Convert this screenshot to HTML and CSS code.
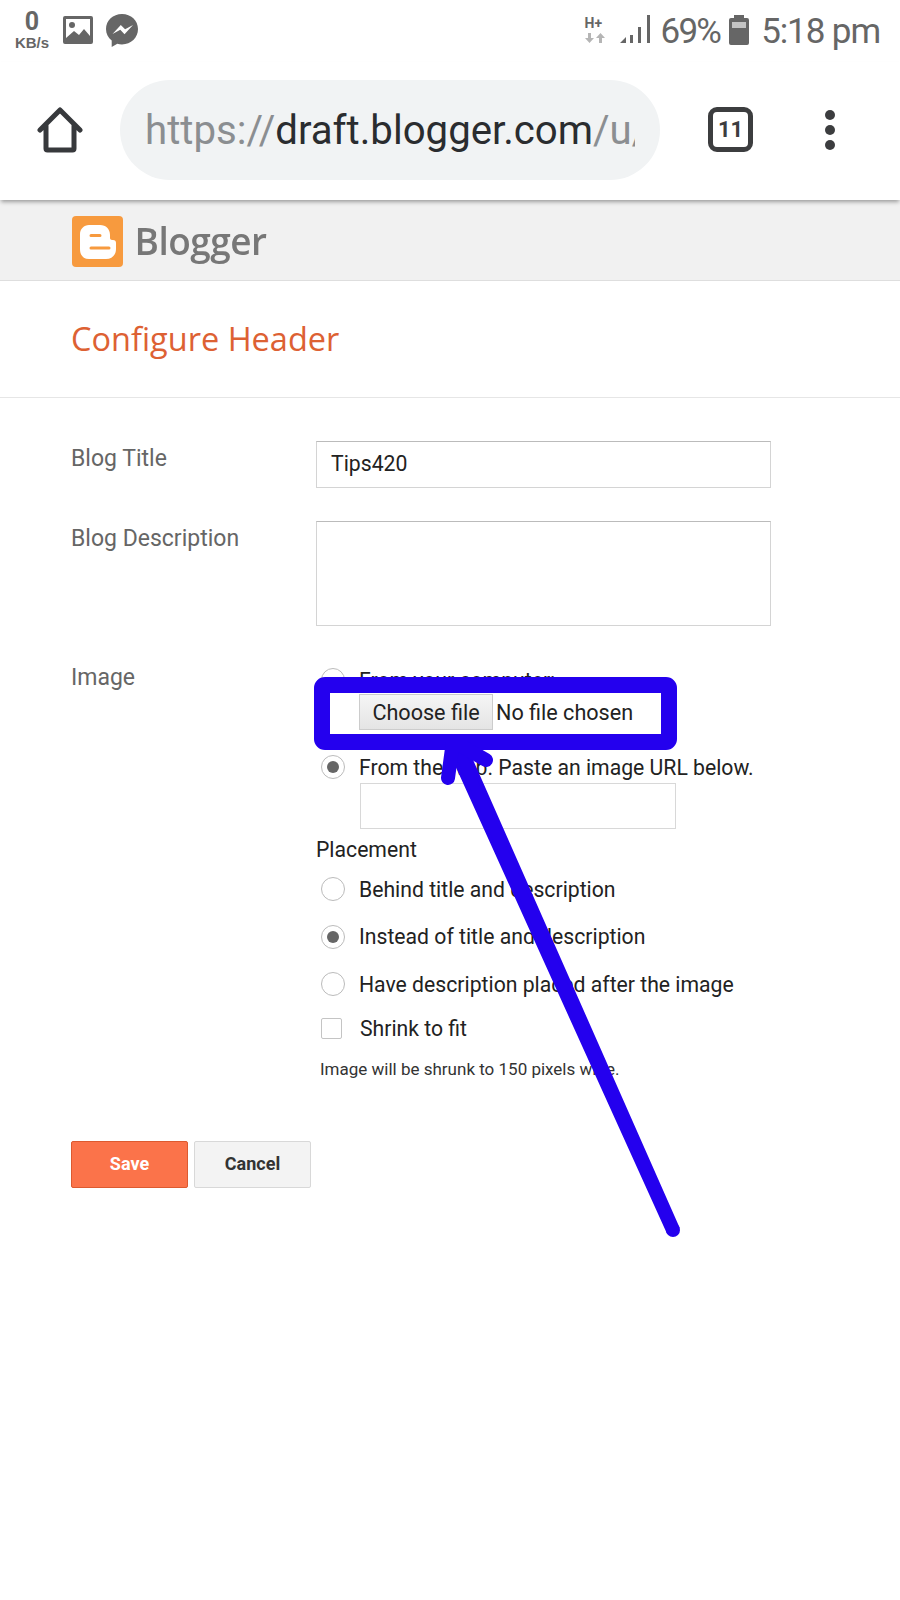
FILE: index.html
```html
<!DOCTYPE html>
<html lang="en">
<head>
    <meta charset="UTF-8">
    <meta name="viewport" content="width=device-width, initial-scale=1.0">
    <title>Configure Header</title>
    <link rel="stylesheet" href="styles.css">
</head>
<body>
    <div class="page">
        <!-- Phone status bar -->
        <div class="status-bar">
            <div class="status-left">
                <div class="speed"><span class="speed-num">0</span><span class="speed-unit">KB/s</span></div>
                <svg class="icon-image" width="30" height="28" viewBox="0 0 30 28">
                    <path fill="#666" fill-rule="evenodd" d="M2 0h26a2 2 0 0 1 2 2v24a2 2 0 0 1-2 2H2a2 2 0 0 1-2-2V2a2 2 0 0 1 2-2zM3 3v19l8-7 5 4 5-6 6 7V3z"/>
                    <circle cx="9" cy="9" r="3" fill="#666"/>
                </svg>
                <svg class="icon-messenger" width="32" height="33" viewBox="0 0 32 33">
                    <path fill="#666" d="M16 0C7 0 0 6.600 0 15c0 4.700 2.200 8.800 5.700 11.600V33l5.600-3.200c1.500.4 3 .6 4.700.6 9 0 16-6.800 16-15.400S25 0 16 0z"/>
                    <path fill="#fff" d="M6.500 20l8.300-9 4.300 4.300 7.900-4.300-8.500 9.200-4.200-4.400z"/>
                </svg>
            </div>
            <div class="status-right">
                <div class="net">
                    <span class="net-type">H+</span>
                    <svg width="20" height="10" viewBox="0 0 20 10">
                        <path fill="#b5b5b5" d="M3 0h3v5h3L4.500 10 0 5h3zM14 10h3V5h3L15.500 0 11 5h3z"/>
                    </svg>
                </div>
                <svg class="icon-signal" width="30" height="28" viewBox="0 0 30 28">
                    <path fill="#666" d="M0 28l6-6v6zM10 20h3v8h-3zM18 12h3v16h-3zM27 0h3v28h-3z"/>
                </svg>
                <span class="status-text pct">69%</span>
                <svg class="icon-battery" width="20" height="30" viewBox="0 0 20 30">
                    <path fill="#666" d="M5 0h10v3h3a2 2 0 0 1 2 2v23a2 2 0 0 1-2 2H2a2 2 0 0 1-2-2V5a2 2 0 0 1 2-2h3z"/>
                    <rect x="3" y="7" width="14" height="6" fill="#c4c4c4"/>
                </svg>
                <span class="status-text">5:18 pm</span>
            </div>
        </div>

        <!-- Browser toolbar -->
        <div class="toolbar">
            <svg class="icon-home" width="46" height="46" viewBox="0 0 46 46">
                <path fill="none" stroke="#37393c" stroke-width="5" stroke-linecap="round" stroke-linejoin="round" d="M3 23L23 3l20 20M9 18v23.500a1.500 1.500 0 0 0 1.500 1.500h25a1.500 1.500 0 0 0 1.500-1.500V18"/>
            </svg>
            <div class="url-pill">
                <div class="url-text"><span class="url-dim">https://</span>draft.blogger.com<span class="url-dim">/u/</span></div>
            </div>
            <div class="tabs-count">11</div>
            <div class="menu-dots"><span></span><span></span><span></span></div>
        </div>

        <!-- Blogger band -->
        <div class="brand-band">
            <svg class="brand-logo" width="51" height="51" viewBox="0 0 51 51">
                <rect width="51" height="51" rx="4" fill="#f79a3e"/>
                <path fill="#fff" d="M17 9h11c6 0 10 4 10 10v3c0 1 1 2 2 2h1c2 0 3 1 3 3v6c0 6-4 10-10 10H17C11 43 8 39 8 33V18c0-5 4-9 9-9z"/>
                <path fill="none" stroke="#f79a3e" stroke-width="3" stroke-linecap="round" d="M19 19.500h9M19 32h18"/>
            </svg>
            <span class="brand-name">Blogger</span>
        </div>

        <!-- Heading -->
        <div class="page-head">
            <h1>Configure Header</h1>
        </div>

        <!-- Form -->
        <form class="config-form">
            <label class="field-label">Blog Title</label>
            <div class="title-input">Tips420</div>

            <label class="field-label">Blog Description</label>
            <div class="desc-input"></div>

            <label class="field-label">Image</label>
            <div class="image-options">
                <div class="radio-row radio-row-top"><span class="radio"></span><span>From your computer:</span></div>
                <div class="file-row"><span class="file-btn">Choose file</span><span>No file chosen</span></div>
                <div class="radio-row radio-row-web"><span class="radio checked"></span><span>From the web. Paste an image URL below.</span></div>
                <div class="url-input"></div>
                <div class="placement-title">Placement</div>
                <div class="radio-row radio-row-place"><span class="radio"></span><span>Behind title and description</span></div>
                <div class="radio-row radio-row-place"><span class="radio checked"></span><span>Instead of title and description</span></div>
                <div class="radio-row radio-row-place"><span class="radio"></span><span>Have description placed after the image</span></div>
                <div class="check-row"><span class="checkbox"></span><span>Shrink to fit</span></div>
                <div class="hint">Image will be shrunk to 150 pixels wide.</div>
            </div>
        </form>

        <div class="actions">
            <button type="button" class="btn btn-save">Save</button>
            <button type="button" class="btn btn-cancel">Cancel</button>
        </div>

        <!-- Hand drawn annotation on top of the screenshot -->
        <svg class="annotation" width="900" height="1600" viewBox="0 0 900 1600">
            <rect x="322" y="685" width="347" height="57" rx="3" fill="none" stroke="#2400ee" stroke-width="16"/>
            <path fill="#2400ee" stroke="#2400ee" stroke-width="4" stroke-linejoin="round" d="M677.500 1227.900L668.500 1232.100L449.500 748.200L463 742z"/>
            <circle cx="673" cy="1230" r="7" fill="#2400ee"/>
            <path fill="none" stroke="#2400ee" stroke-width="14" stroke-linecap="round" stroke-linejoin="round" d="M448 778L453 741L486 760"/>
        </svg>
    </div>
</body>
</html>
```

FILE: styles.css
```css
/* Reset styles */
* {
    margin: 0;
    padding: 0;
    box-sizing: border-box;
}

body {
    font-family: Roboto, "Liberation Sans", sans-serif;
    background-color: #fff;
    color: #222;
}

.page {
    position: relative;
    width: 900px;
    height: 1600px;
    overflow: hidden;
}

/* Status bar */
.status-bar {
    height: 62px;
    display: flex;
    justify-content: space-between;
    align-items: flex-start;
    padding: 14px 20px 0 14px;
}

.status-left {
    display: flex;
    align-items: flex-start;
}

.speed {
    width: 36px;
    margin-top: -3px;
    display: flex;
    flex-direction: column;
    align-items: center;
    color: #666;
    font-weight: 700;
}

.speed-num {
    font-size: 25px;
    line-height: 22px;
}

.speed-unit {
    font-size: 15px;
    line-height: 15px;
    margin-top: 2px;
    font-family: "Liberation Sans", sans-serif;
}

.icon-image {
    margin: 2px 0 0 13px;
}

.icon-messenger {
    margin: 0 0 0 13px;
}

.status-right {
    display: flex;
    align-items: flex-start;
}

.net {
    width: 22px;
    margin-top: 2px;
    display: flex;
    flex-direction: column;
    gap: 2px;
    color: #666;
}

.net-type {
    font-size: 14px;
    font-weight: 700;
    line-height: 15px;
}

.icon-signal {
    margin: 1px 11px 0 13px;
}

.status-text {
    font-size: 35px;
    line-height: 34px;
    letter-spacing: -1.1px;
    margin-top: 1px;
    color: #666;
}

.pct {
    letter-spacing: -1.800px;
}

.icon-battery {
    margin: 1px 12px 0 9px;
}

/* Browser toolbar */
.toolbar {
    height: 138px;
    display: flex;
    align-items: flex-start;
    padding-top: 18px;
    padding-left: 37px;
    box-shadow: 0 3px 4px -1px rgba(0, 0, 0, 0.35);
    position: relative;
}

.icon-home {
    margin-top: 27px;
}

.url-pill {
    width: 540px;
    height: 100px;
    margin-left: 37px;
    padding: 0 25px;
    border-radius: 50px;
    background-color: #f1f3f4;
    display: flex;
    align-items: center;
}

.url-text {
    width: 490px;
    overflow: hidden;
    white-space: nowrap;
    font-size: 40.200px;
    color: #2a2c2f;
}

.url-dim {
    color: #8b8e91;
}

.tabs-count {
    width: 45px;
    height: 45px;
    margin: 27px 0 0 48px;
    border: 5px solid #3c3d3f;
    border-radius: 9px;
    display: flex;
    align-items: center;
    justify-content: center;
    font-size: 22px;
    font-weight: 700;
    color: #3c3d3f;
}

.menu-dots {
    margin: 30px 0 0 72px;
    display: flex;
    flex-direction: column;
    gap: 5px;
}

.menu-dots span {
    width: 10px;
    height: 10px;
    border-radius: 50%;
    background-color: #3c3d3f;
}

/* Blogger band */
.brand-band {
    height: 81px;
    background-color: #f1f1f1;
    border-bottom: 1px solid #dedede;
    padding-left: 71.500px;
    display: flex;
    align-items: center;
    gap: 12px;
}

.brand-logo {
    margin-top: 2px;
}

.brand-name {
    font-family: "Open Sans", sans-serif;
    font-size: 37px;
    font-weight: 600;
    color: #777;
    letter-spacing: -0.5px;
    filter: blur(0.6px);
}

/* Heading */
.page-head {
    height: 117px;
    border-bottom: 1px solid #e6e6e6;
    padding: 38px 0 0 71px;
}

.page-head h1 {
    font-family: "Open Sans", sans-serif;
    font-size: 32.500px;
    font-weight: 400;
    line-height: 40px;
    color: #dd6133;
}

/* Form */
.config-form {
    display: grid;
    grid-template-columns: 245px 455px;
    padding: 43px 0 0 71px;
    font-size: 21.200px;
}

.field-label {
    font-size: 23px;
    color: #666;
    line-height: 35px;
}

.title-input {
    height: 47px;
    border: 1px solid #d4d4d4;
    border-top-color: #bbb;
    padding-left: 14px;
    line-height: 44px;
    margin-bottom: 33px;
}

.desc-input {
    height: 105px;
    border: 1px solid #d4d4d4;
    border-top-color: #bbb;
    margin-bottom: 34px;
}

.image-options {
    display: flex;
    flex-direction: column;
    padding-top: 8px;
}

.radio-row {
    display: flex;
    align-items: center;
    gap: 14px;
    padding-left: 5px;
    height: 24px;
}

.radio {
    width: 24px;
    height: 24px;
    border: 1px solid #bbb;
    border-radius: 50%;
    display: flex;
    align-items: center;
    justify-content: center;
    flex-shrink: 0;
}

.radio.checked::after {
    content: "";
    width: 12px;
    height: 12px;
    border-radius: 50%;
    background-color: #666;
}

.file-row {
    display: flex;
    align-items: center;
    gap: 3px;
    padding-left: 43px;
    margin-top: 2px;
    font-size: 21.600px;
}

.file-btn {
    width: 134px;
    height: 36px;
    border: 1px solid #ccc;
    background: linear-gradient(#f5f5f5, #e4e4e4);
    display: flex;
    align-items: center;
    justify-content: center;
}

.radio-row-web {
    margin-top: 25px;
}

.url-input {
    width: 316px;
    height: 46px;
    margin: 4px 0 0 44px;
    border: 1px solid #d8d8d8;
}

.placement-title {
    line-height: 24px;
    margin-top: 9px;
}

.radio-row-place {
    margin-top: 23.500px;
}

.placement-title + .radio-row-place {
    margin-top: 15px;
}

.check-row {
    display: flex;
    align-items: center;
    gap: 18px;
    padding-left: 5px;
    margin-top: 21px;
    height: 22px;
}

.checkbox {
    width: 21px;
    height: 21px;
    border: 1px solid #c4c4c4;
    border-radius: 2px;
}

.hint {
    font-size: 17px;
    line-height: 18px;
    color: #333;
    padding-left: 4px;
    margin-top: 21px;
}

/* Buttons */
.actions {
    display: flex;
    gap: 6px;
    padding-left: 71px;
    margin-top: 63px;
}

.btn {
    width: 117px;
    height: 47px;
    padding-bottom: 3px;
    border-radius: 2px;
    font-family: Roboto, sans-serif;
    font-size: 18px;
    font-weight: 700;
}

.btn-save {
    background-color: #fb734a;
    border: 1px solid #dc5a30;
    color: #fff;
}

.btn-cancel {
    background-color: #f3f3f3;
    border: 1px solid #d8d8d8;
    color: #333;
}

/* Annotation overlay */
.annotation {
    position: absolute;
    left: 0;
    top: 0;
}
```
